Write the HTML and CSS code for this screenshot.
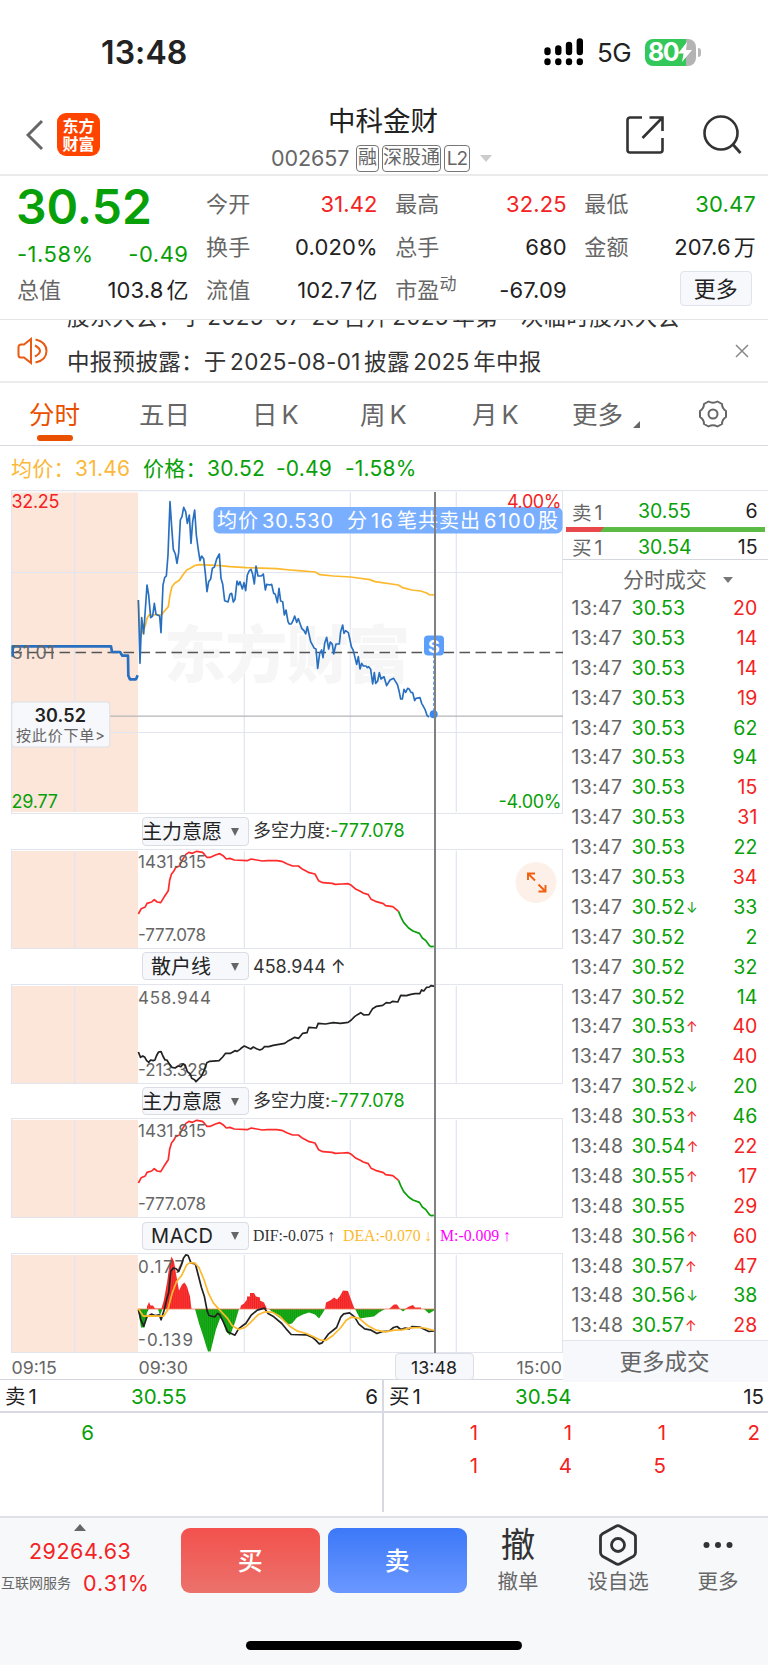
FILE: index.html
```html
<!DOCTYPE html>
<html lang="zh-CN">
<head>
<meta charset="utf-8">
<title>中科金财 002657</title>
<link rel="stylesheet" href="styles.css">
</head>
<body>
<div class="app">
  <div class="status">
    <span class="clock">13:48</span>
    <svg class="signal" width="40" height="28" viewBox="0 0 40 28"><g stroke="#000" stroke-width="6.4" stroke-linecap="round"><path d="M3.5 12.5V14M14.300 10.500V14M25 7V14M35.800 3.500V14M3.500 23.500v.5M14.300 23.500v.5M25 23.500v.5M35.800 23.500v.5"/></g></svg>
    <span class="net">5G</span>
    <span class="battery"><b>80</b><svg width="14" height="20" viewBox="0 0 14 20"><path d="M9 0 0 11.500h5.500L4 20 14 8H8z" fill="#fff"/></svg></span>
    <i class="nub"></i>
  </div>

  <header class="header">
    <svg class="back" width="18" height="32" viewBox="0 0 18 32"><path d="M16 2 2 16l14 14" fill="none" stroke="#666" stroke-width="3"/></svg>
    <div class="logo"><span>东方</span><span>财富</span></div>
    <div class="title">
      <h1>中科金财</h1>
      <div class="code"><span class="num">002657</span><i>融</i><i class="w3">深股通</i><i class="l2">L2</i><b class="tri"></b></div>
    </div>
    <svg class="share" width="40" height="40" viewBox="0 0 40 40"><path d="M17 2.500H5a2.500 2.500 0 0 0-2.500 2.500V35A2.500 2.500 0 0 0 5 37.500H35a2.500 2.500 0 0 0 2.500-2.500V23M24.500 2.500h13V16M37 3 17.500 23" fill="none" stroke="#333" stroke-width="2.600"/></svg>
    <svg class="search" width="42" height="42" viewBox="0 0 42 42"><circle cx="19" cy="19" r="16.500" fill="none" stroke="#333" stroke-width="2.600"/><path d="m30.500 30 8 9" stroke="#333" stroke-width="2.800"/></svg>
  </header>

  <section class="quote">
    <div class="col">
      <div class="price">30.52</div>
      <div class="pair chg"><span>-1.58%</span><span>-0.49</span></div>
      <div class="pair"><label>总值</label><span>103.8<em>亿</em></span></div>
    </div>
    <div class="col">
      <div class="pair"><label>今开</label><span class="r">31.42</span></div>
      <div class="pair"><label>换手</label><span>0.020%</span></div>
      <div class="pair"><label>流值</label><span>102.7<em>亿</em></span></div>
    </div>
    <div class="col">
      <div class="pair"><label>最高</label><span class="r">32.25</span></div>
      <div class="pair"><label>总手</label><span>680</span></div>
      <div class="pair"><label>市盈<sup>动</sup></label><span>-67.09</span></div>
    </div>
    <div class="col">
      <div class="pair"><label>最低</label><span class="g">30.47</span></div>
      <div class="pair"><label>金额</label><span>207.6<em>万</em></span></div>
      <div class="pair end"><button class="more">更多</button></div>
    </div>
  </section>

  <section class="notice">
    <svg class="horn" width="32" height="28" viewBox="0 0 32 28"><g fill="none" stroke="#e95a12" stroke-width="2"><path d="M14 2v24L7 20.500H4A2.500 2.500 0 0 1 1.500 18V10A2.500 2.500 0 0 1 4 7.500H7zM18 8.500q10 5.500 0 11M18.500 2.500q11 2.500 11 11.500t-11 11.500"/></g></svg>
    <div class="lines">
      <p class="first">股东大会：于<s></s>2025-07-23<s></s>召开<s></s>2025<s></s>年第一次临时股东大会</p>
      <p>中报预披露：于<s></s>2025-08-01<s></s>披露<s></s>2025<s></s>年中报</p>
    </div>
    <svg class="close" width="14" height="14" viewBox="0 0 14 14"><path d="m1 1 12 12M13 1 1 13" stroke="#888" stroke-width="1.500"/></svg>
  </section>

  <nav class="tabs">
    <span class="on">分时</span><span>五日</span><span>日<u>K</u></span><span>周<u>K</u></span><span>月<u>K</u></span><span>更多<b></b></span>
    <svg width="30" height="28" viewBox="0 0 30 28"><g fill="none" stroke="#666" stroke-width="2"><path d="M10.500 1.500Q15 4 19.500 1.500L24 4Q24 8.500 28 11V17Q24 19.500 24 24L19.500 26.500Q15 24 10.500 26.500L6 24Q6 19.500 2 17V11Q6 8.500 6 4Z" stroke-linejoin="round"/><circle cx="15" cy="14" r="4.500"/></g></svg>
  </nav>

  <div class="avg"><span class="o w1">均价：</span><span class="o w2">31.46</span><span class="w1">价格：</span><span class="w3a">30.52</span><span class="w3a">-0.49</span><span>-1.58%</span></div>

  <main class="main">
    <div class="charts">
      <svg class="plot" width="563" height="324" viewBox="0 490 563 324">
        <rect x="11.500" y="492.500" width="126.500" height="319.500" fill="#fce6da"/>
        <g stroke="#e2e5ee" stroke-width="1.200" fill="none"><path d="M11.500 490.600H563M11.500 490V814M11.500 572.500H563M11.500 732.500H563M11.500 813.600H563M562.600 490V814M74.700 492V812M244.300 492V812M350.300 492V812M456.300 492V812"/></g>
        <text x="164" y="678" class="mark" textLength="246">东方财富</text>
        <path d="M11.500 652.400H563" stroke="#555" stroke-width="1.500" stroke-dasharray="10.500 5.500"/>
        <path d="M110 716.200H563" stroke="#b5b5b5" stroke-width="1.300"/>
        <rect x="213.500" y="507" width="349" height="26.500" rx="6" fill="#7aafff"/>
        <g class="tip"><text x="217" y="528" textLength="41">均价</text><text x="262" y="528" textLength="71">30.530</text><text x="347" y="528">分</text><text x="371" y="528" textLength="22">16</text><text x="397" y="528" textLength="83">笔共卖出</text><text x="484" y="528" textLength="51">6100</text><text x="538" y="528">股</text></g>
        <g transform="translate(0 480) scale(.333333)" fill="none" stroke-linejoin="round">
          <polyline stroke="#fdb92e" stroke-width="5.200" points="415,360 421,470 428,455 436,437 441,415 447,405 485,404 492,395 505,380 510,345 516,320 524,310 538,301 548,286 560,270 572,264 586,256 600,254 660,257 690,260 740,263 830,266 870,270 895,272 945,276 960,284 1000,288 1052,291 1110,299 1125,305 1195,315 1208,323 1235,330 1262,333 1280,339 1288,344 1305,345"/>
          <path stroke="#286fc0" stroke-width="8" d="M38 530V499H333L336 516H360L367 527H384L385 587L390 598H408L413 586"/>
          <polyline stroke="#286fc0" stroke-width="5" points="415,360 420,550 425,413 431,462 441,315 446,345 452,413 458,408 463,370 468,403 479,408 483,458 489,315 494,293 499,288 504,225 510,65 515,140 520,208 526,222 531,250 536,218 541,120 546,110 551,82 557,95 562,130 568,105 573,190 578,125 584,90 589,165 595,210 600,242 605,228 611,236 616,280 621,335 626,305 632,297 637,265 643,262 650,237 658,222 663,295 668,312 674,362 684,366 690,343 695,340 700,366 705,358 711,303 716,315 720,305 727,327 732,308 737,332 742,285 748,272 753,268 758,283 763,312 768,258 774,288 784,288 790,282 796,330 800,313 810,315 815,313 821,340 826,343 832,368 837,325 842,363 848,365 853,405 858,390 864,425 868,432 874,432 879,422 884,408 890,427 895,416 905,445 912,452 917,462 922,440 932,485 943,505 948,507 953,565 959,520 965,510 969,533 974,490 980,472 986,507 991,486 997,493 1001,522 1008,492 1018,492 1022,455 1028,435 1032,460 1037,452 1045,458 1050,480 1054,500 1060,512 1070,553 1075,530 1080,567 1085,550 1090,558 1098,558 1102,563 1106,560 1112,568 1118,612 1123,578 1127,610 1133,603 1138,578 1143,597 1152,590 1160,617 1170,600 1181,595 1185,602 1192,613 1197,632 1202,657 1207,657 1212,628 1217,637 1223,625 1228,628 1233,637 1238,638 1244,662 1248,655 1260,653 1265,670 1275,688 1281,706 1287,711"/>
          <path d="M1302 525V700" stroke="#4a92f5" stroke-width="5" stroke-dasharray="9 7"/>
          <circle cx="1301" cy="703" r="12" fill="#3b87f2"/>
        </g>
        <rect x="424" y="635.500" width="20" height="20" rx="4" fill="#5b9ffb"/>
        <text x="434" y="652.500" class="sell">S</text>
        <g class="ax"><text x="11.500" y="508" class="fr" textLength="48">32.25</text><text x="11.500" y="658.500" textLength="43">31.01</text><text x="11.500" y="807.500" class="fg" textLength="46.500">29.77</text><text x="507" y="508" class="fr" textLength="54.500">4.00%</text><text x="498.500" y="807.500" class="fg" textLength="63">-4.00%</text></g>
        <rect x="11.800" y="702" width="98" height="45" rx="3" fill="#f6f8fb" stroke="#dcdfe6"/>
        <text x="34.500" y="722" class="op" textLength="51.500">30.52</text>
        <text x="16" y="740.500" class="ob" textLength="89">按此价下单&gt;</text>
      </svg>

      <div class="ind"><button><span>主力意愿</span><b></b></button><p>多空力度:<em>-777.078</em></p></div>
      <svg class="plot" width="563" height="100" viewBox="0 849 563 100">
        <use href="#band" y="849"/>
        <use href="#force"/>
        <g class="ay"><text x="138" y="867.500" textLength="68">1431.815</text><text x="138" y="940.500" textLength="68">-777.078</text></g>
        <circle cx="536" cy="882.500" r="20.500" fill="#fdf0e9"/>
        <path d="M528 880V873.500H535M528 873.500 535 880.500M545.500 885V891.500H538.500M545.500 891.500 538.500 884.500" fill="none" stroke="#f0600f" stroke-width="1.900"/>
      </svg>

      <div class="ind"><button class="mid"><span>散户线</span><b></b></button><p class="wide">458.944 ↑</p></div>
      <svg class="plot" width="563" height="100" viewBox="0 984 563 100">
        <use href="#band" y="984"/>
        <g class="ay"><text x="138" y="1003.500" textLength="73">458.944</text><text x="138" y="1075.500" textLength="70">-213.328</text></g>
        <polyline transform="translate(0 810) scale(.36034 .333333)" class="ln" stroke="#222" points="384,726 390,742 396,738 402,742 407,752 413,757 418,750 425,752 430,750 434,738 440,726 447,725 452,738 458,750 463,750 470,762 477,772 486,774 494,768 502,770 508,762 514,766 520,785 528,792 532,805 540,809 544,815 550,808 558,800 566,783 574,758 582,754 608,752 618,741 626,730 640,730 645,727 652,722 658,724 666,718 671,713 678,708 688,713 696,717 703,711 712,716 721,720 728,717 734,710 746,710 758,706 790,700 798,694 806,689 818,682 829,685 840,670 852,668 857,652 878,654 883,640 903,642 925,638 945,640 966,637 975,630 984,620 992,614 1001,608 1010,615 1024,614 1034,596 1045,589 1062,586 1072,578 1082,579 1090,574 1104,576 1112,556 1128,557 1140,553 1152,551 1165,551 1170,540 1176,543 1184,532 1192,531 1196,527 1206,529"/>
      </svg>

      <div class="ind"><button><span>主力意愿</span><b></b></button><p>多空力度:<em>-777.078</em></p></div>
      <svg class="plot" width="563" height="100" viewBox="0 1118.500 563 100">
        <defs>
          <g id="band"><rect x="11.500" y="2" width="126.500" height="97" fill="#fce6da"/><path d="M11.500 .5H563M11.500 99.500H563M11.500 0V100M562.600 0V100M74.700 2V99M244.300 2V99M350.300 2V99M456.300 2V99" stroke="#e2e5ee" stroke-width="1.200"/></g>
          <g id="force"><g transform="translate(0 810) scale(.36034 .333333)" class="ln">
            <polyline stroke="#ff2a2a" points="384,312 392,296 403,291 408,280 421,276 428,269 436,276 446,278 455,262 467,242 471,210 476,192 482,184 488,172 498,168 506,150 516,133 524,127 534,130 546,124 562,127 568,134 574,142 584,142 598,135 610,131 619,137 628,147 638,145 650,150 686,152 697,147 728,153 742,152 768,152 782,154 796,161 812,168 828,168 840,178 848,182 858,188 874,192 884,212 896,218 922,220 930,223 950,222 966,221 975,226 988,238 1000,244 1008,249 1022,254 1030,268 1042,274 1064,281 1070,287 1090,290 1106,304"/>
            <polyline stroke="#0aa00a" points="1106,304 1112,320 1120,337 1134,354 1146,363 1164,370 1172,384 1182,392 1192,407 1197,410 1204,409"/>
          </g></g>
          <pattern id="rs" width="1.910" height="10" patternUnits="userSpaceOnUse"><rect width="1.910" height="10" fill="#f85a5a"/><rect width="1.500" height="10" fill="#f42020"/></pattern>
          <pattern id="gs" width="1.910" height="10" patternUnits="userSpaceOnUse"><rect width="1.910" height="10" fill="#45b845"/><rect width="1.500" height="10" fill="#08a008"/></pattern>
        </defs>
        <use href="#band" y="1118.500"/>
        <use href="#force" y="269.500"/>
        <g class="ay"><text x="138" y="1137" textLength="68">1431.815</text><text x="138" y="1210" textLength="68">-777.078</text></g>
      </svg>

      <div class="ind"><button class="mid"><span class="en">MACD</span><b></b></button><p class="macd"><i class="d1">DIF:-0.075 ↑</i><i class="d2">DEA:-0.070 ↓</i><i class="d3">M:-0.009 ↑</i></p></div>
      <svg class="plot" width="563" height="100" viewBox="0 1253.500 563 100">
        <use href="#band" y="1253.500"/>
        <path fill="url(#rs)" d="M147 1309.500V1307L149 1302.500 150.500 1306H153L155 1309H161.500L164 1300 167 1283 170 1262 171.500 1257 174 1262 177 1280 179 1291 182 1285 184.500 1283 187 1287 190 1297 191.500 1309.500ZM240 1309.500 241 1306 244 1304 247 1300V1297H250V1293.500H254L256 1297 260 1298V1301L264 1303 267 1309.500ZM325 1309.500 326 1303 331 1300.500 334 1298 337 1300 340 1296.500 343 1291 348 1291.500 351 1300 354 1308 355 1309.500ZM389 1309.500 394 1305H397L400 1309.500ZM405 1309.500 409 1307 413 1305.500 415 1308H421V1309.500Z"/>
        <path fill="url(#gs)" d="M138 1309.500 141 1328H144.500L147 1313 149 1309.500ZM158 1309.500 160 1316 162.500 1309.500ZM195 1309.500 199 1324 203 1336 206 1346 208 1352H210.500L213 1342 216 1330 220 1319 222 1319 226 1332 230 1336 235 1323 239 1309.500ZM269 1309.500 275 1315 282 1320 288 1325 292 1324 297 1318 303 1315 309 1313 315 1315 319 1319 323 1313 325 1309.500ZM355 1309.500 360 1319 366 1318 374 1317 379 1313 385 1309.500ZM400 1309.500 403 1312 406 1309.500ZM424 1309.500 429 1314 434 1311V1309.500Z"/>
        <path d="M138 1309.500H435" stroke="#f07a5c" stroke-width=".8"/>
        <g class="ay"><text x="138" y="1273" textLength="46">0.177</text><text x="138" y="1346" textLength="55">-0.139</text></g>
        <g transform="translate(0 1080) scale(.36034 .333333)" class="ln">
          <polyline stroke="#222" points="384,690 391,722 399,740 408,712 414,708 420,704 430,708 442,706 447,721 456,690 463,658 468,640 474,575 481,566 488,567 496,576 504,555 509,536 516,526 522,528 530,550 542,553 551,590 559,624 567,650 575,695 580,708 596,712 604,702 610,706 620,728 632,757 652,767 662,748 674,738 682,732 698,706 714,692 734,686 744,702 760,712 782,732 794,748 808,765 850,766 866,773 876,782 886,793 894,790 912,763 934,744 946,712 954,703 970,700 984,712 996,734 1012,748 1030,752 1046,762 1062,756 1080,755 1092,744 1102,741 1112,750 1124,746 1136,748 1144,741 1166,743 1190,756 1206,754"/>
          <polyline stroke="#fdb92e" points="384,688 398,710 414,709 454,710 466,690 478,640 490,606 504,588 518,556 526,550 540,550 552,564 566,600 578,640 592,670 610,692 630,715 644,738 662,750 680,744 694,730 716,706 736,697 756,698 776,710 790,726 806,742 826,755 850,762 870,772 890,782 904,783 924,768 946,744 960,723 974,713 996,716 1020,738 1044,752 1070,757 1094,752 1116,751 1140,745 1168,744 1184,747 1206,753"/>
        </g>
      </svg>
      <div class="axis"><span>09:15</span><span>09:30</span><span class="now">13:48</span><span class="last">15:00</span></div>
      <i class="cross"></i>
    </div>

    <aside class="side">
      <div class="lvl"><label>卖<u>1</u></label><span>30.55</span><b>6</b></div>
      <svg class="ratio" width="199" height="5" viewBox="0 0 199 5"><path d="M0 0H199V5H0z" fill="#5bbb44"/><path d="M0 0H38L34 5H0z" fill="#e8484b"/></svg>
      <div class="lvl l2nd"><label>买<u>1</u></label><span>30.54</span><b>15</b></div>
      <div class="dealhd">分时成交<b></b></div>
      <ol class="deals">
        <li><time>13:47</time><span>30.53</span><b class="r">20</b></li>
        <li><time>13:47</time><span>30.53</span><b class="r">14</b></li>
        <li><time>13:47</time><span>30.53</span><b class="r">14</b></li>
        <li><time>13:47</time><span>30.53</span><b class="r">19</b></li>
        <li><time>13:47</time><span>30.53</span><b class="g">62</b></li>
        <li><time>13:47</time><span>30.53</span><b class="g">94</b></li>
        <li><time>13:47</time><span>30.53</span><b class="r">15</b></li>
        <li><time>13:47</time><span>30.53</span><b class="r">31</b></li>
        <li><time>13:47</time><span>30.53</span><b class="g">22</b></li>
        <li><time>13:47</time><span>30.53</span><b class="r">34</b></li>
        <li><time>13:47</time><span>30.52<i class="g">↓</i></span><b class="g">33</b></li>
        <li><time>13:47</time><span>30.52</span><b class="g">2</b></li>
        <li><time>13:47</time><span>30.52</span><b class="g">32</b></li>
        <li><time>13:47</time><span>30.52</span><b class="g">14</b></li>
        <li><time>13:47</time><span>30.53<i class="r">↑</i></span><b class="r">40</b></li>
        <li><time>13:47</time><span>30.53</span><b class="r">40</b></li>
        <li><time>13:47</time><span>30.52<i class="g">↓</i></span><b class="g">20</b></li>
        <li><time>13:48</time><span>30.53<i class="r">↑</i></span><b class="g">46</b></li>
        <li><time>13:48</time><span>30.54<i class="r">↑</i></span><b class="r">22</b></li>
        <li><time>13:48</time><span>30.55<i class="r">↑</i></span><b class="r">17</b></li>
        <li><time>13:48</time><span>30.55</span><b class="r">29</b></li>
        <li><time>13:48</time><span>30.56<i class="r">↑</i></span><b class="r">60</b></li>
        <li><time>13:48</time><span>30.57<i class="r">↑</i></span><b class="r">47</b></li>
        <li><time>13:48</time><span>30.56<i class="g">↓</i></span><b class="g">38</b></li>
        <li><time>13:48</time><span>30.57<i class="r">↑</i></span><b class="r">28</b></li>
      </ol>
      <div class="moredeals">更多成交</div>
    </aside>
  </main>

  <section class="depth">
    <div class="half">
      <div class="dh"><label>卖<u>1</u></label><span>30.55</span><b>6</b></div>
      <div class="q g"><span>6</span></div>
    </div>
    <div class="half right">
      <div class="dh"><label>买<u>1</u></label><span>30.54</span><b>15</b></div>
      <div class="q r"><span>1</span><span>1</span><span>1</span><span>2</span><span>1</span><span>4</span><span>5</span></div>
    </div>
  </section>

  <footer class="bottom">
    <div class="index"><b></b><div class="val">29264.63</div><div class="sub"><span>互联网服务</span><em>0.31%</em></div></div>
    <button class="buy">买</button><button class="sellb">卖</button>
    <div class="act a1"><div class="ic che">撤</div><span>撤单</span></div>
    <div class="act a2"><div class="ic"><svg width="40" height="42" viewBox="0 0 40 42"><g fill="none" stroke="#333" stroke-width="2.800"><path d="M18 2.200Q20 1 22 2.200L35.500 9.800Q37.500 11 37.500 13.500V28.500Q37.500 31 35.500 32.200L22 39.800Q20 41 18 39.800L4.500 32.200Q2.500 31 2.500 28.500V13.500Q2.500 11 4.500 9.800Z"/><circle cx="20" cy="21" r="6.500"/></g></svg></div><span>设自选</span></div>
    <div class="act a3"><div class="ic"><svg width="32" height="42" viewBox="0 0 32 42"><g fill="#333"><circle cx="4.500" cy="21" r="3"/><circle cx="16" cy="21" r="3"/><circle cx="27.500" cy="21" r="3"/></g></svg></div><span>更多</span></div>
    <i class="home"></i>
  </footer>
</div>
</body>
</html>
```
FILE: styles.css
```css
*{box-sizing:border-box}
body{margin:0;background:#fff;font-family:Inter,"Noto Sans CJK SC",sans-serif;color:#222}
i,em{font-style:normal}
u{text-decoration:none}
b{font-weight:400}
h1,p,ol{margin:0;padding:0;font-weight:400}
button{font-family:inherit;padding:0;margin:0;border:0}
.app{width:768px;height:1665px;overflow:hidden;display:flex;flex-direction:column}
.app>*{flex:none}
svg{display:block;flex:none}
.r{color:#f42222}
.g{color:#08a008}

.status{height:104px;display:flex;align-items:center;padding:0 0 0 101px}
.clock{font-size:32px;font-weight:600;width:443px;letter-spacing:.1px}
.signal{margin-right:13px}
.net{font-size:26px;width:48px;letter-spacing:-.6px}
.battery{width:51px;height:27px;border-radius:8px;background:linear-gradient(90deg,#34c759 41px,#b3b3b3 41px);display:flex;align-items:center;padding-left:3px}
.battery b{color:#fff;font-weight:700;font-size:25px;letter-spacing:-1.500px}
.nub{width:3px;height:9px;margin-left:1.500px;background:#b8b8b8;border-radius:0 3px 3px 0}

.header{height:72px;border-bottom:2px solid #ebebeb;display:flex;align-items:flex-start;padding-left:26px}
.back{margin-top:15px}
.logo{width:43px;height:43px;margin:9px 0 0 13px;border-radius:9px;background:#ff4400;color:#fff;font-weight:700;font-size:16px;line-height:18px;display:flex;flex-direction:column;align-items:center;justify-content:center}
.title{width:368px;margin-left:99px;display:flex;flex-direction:column;align-items:center}
.title h1{font-size:27.500px;line-height:34px;color:#222;width:110px}
.code{display:flex;align-items:center;height:30px;margin-top:5px;margin-left:-3px;color:#666}
.code .num{font-size:21.500px;width:85px;letter-spacing:-.1px}
.code i{height:27px;width:23px;margin-right:3px;border:1.500px solid #777;border-radius:4px;font-size:19px;line-height:23px;text-align:center;white-space:nowrap;display:flex;justify-content:center}
.code .w3{width:59px}
.code .l2{width:26px;letter-spacing:-.8px;margin-right:10px;line-height:25px}
.tri{border:6px solid transparent;border-top:7px solid #ccc;border-bottom:0}
.share{margin:11px 0 0 58px}
.search{margin:10px 0 0 37px}

.quote{height:144px;border-bottom:1.500px solid #e4e4e4;display:grid;grid-template-columns:repeat(4,171.500px);column-gap:17.600px;padding:6px 0 0 17px}
.pair{height:43px;display:flex;align-items:center;justify-content:space-between;font-size:22px;line-height:30px;letter-spacing:.1px;white-space:nowrap}
.pair label{color:#666}
.pair em{margin-left:3px}
.price{height:52px;line-height:50px;font-size:48px;font-weight:600;color:#08a008;margin-left:-1px}
.pair.chg{height:40px;color:#08a008;padding-bottom:1px;letter-spacing:.5px}
.chg+.pair{height:32px}
.pair sup{font-size:17px;line-height:10px;vertical-align:8px}
.end{justify-content:flex-end}
.more{width:72px;height:35px;margin-right:4px;margin-top:-2px;background:#f6f8fb;border:1.500px solid #dfe3ea;border-radius:4px;font-size:22px;line-height:30px;color:#222}

.notice{height:63px;border-bottom:2px solid #ececec;display:flex;overflow:hidden;padding-left:17px}
.horn{margin-top:17px}
.lines{width:686px;padding-left:18px}
.lines p{height:45px;line-height:45px;font-size:22.500px;letter-spacing:.3px;color:#333;white-space:nowrap}
.lines .first{margin-top:-26px}
.lines s{display:inline-block;width:3.500px}
.close{margin-top:24px}

.tabs{height:63px;border-bottom:1.500px solid #d8d8de;display:grid;grid-template-columns:110px 113px 108px 112px 100px 125px 40px;padding-left:29px;font-size:25.500px;line-height:63px;color:#666}
.tabs u{margin-left:4px}
.tabs .on{color:#e95000;position:relative}
.on::after{content:"";position:absolute;left:8px;top:52px;width:36px;height:6px;border-radius:3px;background:#e95000}
.tabs span b{display:inline-block;margin-left:10px;border-left:7px solid transparent;border-bottom:7px solid #666;transform:translateY(4px)}
.tabs svg{margin:17px 0 0 1px}

.avg{height:44px;display:flex;padding-left:11px;font-size:21px;line-height:46px;color:#08a008;letter-spacing:.2px}
.avg .o{color:#fbb83a}
.avg .w1{width:64px;white-space:nowrap}
.avg .w2{width:68px}
.avg .w3a{width:69px}

.main{display:flex;height:893px}
.charts{width:563px;position:relative;display:flex;flex-direction:column}
.ind{height:34.830px;display:flex;align-items:center;padding-left:142px;flex:none}
.ind button{width:106.500px;height:28.500px;background:#f6f8fb;border:1px solid #d9dce3;border-radius:4px;display:flex;align-items:center;justify-content:space-between;padding:1px 9px 0 0;color:#222;font-size:20px;line-height:26px}
.ind button span{margin-left:-1px}
.ind .mid{padding-left:9px}
.ind .en{letter-spacing:.6px}
.ind button b{border:4.500px solid transparent;border-top:8px solid #666;border-bottom:0}
.ind p{font-size:18px;margin-left:4.500px;white-space:nowrap;color:#333;line-height:26px}
.ind p em{color:#08a008;letter-spacing:.1px}
.ind .wide{padding-top:1px}
.ind .macd{font-family:"Liberation Serif",Inter,serif;font-size:15.800px;display:flex}
.macd .d1{width:90px}.macd .d2{width:97px;color:#fdb92e}.macd .d3{color:#f0f}
.mark{font-size:62px;font-weight:900;fill:#f6f6f7}
.tip{font-size:20px;fill:#fff}
.sell{font-size:18px;font-weight:700;fill:#fff;text-anchor:middle}
.ax{font-size:18px;fill:#666}
.fr{fill:#f42222}.fg{fill:#08a008}
.op{font-size:18px;font-weight:600;fill:#222}
.ob{font-size:15px;fill:#666}
.ay{font-size:17px;fill:#666}
.ln{fill:none;stroke-linejoin:round}
.ln polyline,polyline.ln{stroke-width:1.700px;vector-effect:non-scaling-stroke}
.axis{height:26.500px;display:grid;grid-template-columns:127px 256px 79px 1fr;padding-left:11.500px;border-bottom:1.500px solid #d5d7de;font-size:17.800px;line-height:29px;color:#666}
.axis .now{height:27px;background:#f6f8fb;border:1px solid #dcdfe6;border-radius:4px;color:#222;text-align:center;line-height:27px}
.axis .last{text-align:right;margin-right:1px}
.cross{position:absolute;left:434px;top:2px;width:1.500px;height:861px;background:#808080}

.side{width:205px;border-top:1px solid #e2e5ee;display:flex;flex-direction:column}
.lvl{height:36px;padding:4px 10.500px 0 9px;display:grid;grid-template-columns:66px 1fr auto;align-items:center;font-size:19.500px}
.lvl label{color:#666}
.lvl label,.dh label{white-space:nowrap}
label u{margin-left:3px}
.lvl span{color:#08a008}
.ratio{margin-left:2.500px}
.l2nd{height:28px;padding-top:0;border-bottom:1.500px solid #d5d7de}
.dealhd{height:33px;padding-left:60px;font-size:21px;line-height:39px;color:#666;letter-spacing:-.1px}
.dealhd b{display:inline-block;margin-left:16px;border:5px solid transparent;border-top:6px solid #777;border-bottom:0;vertical-align:4px}
.deals{list-style:none;height:746.500px}
.deals li{height:29.900px;display:grid;grid-template-columns:60px 1fr auto;align-items:center;padding:0 10.500px 0 8.500px;font-size:19.500px;letter-spacing:.1px}
.deals time{color:#666;letter-spacing:.3px}
.deals span{color:#08a008;white-space:nowrap}
.deals i{font-size:14px;vertical-align:1px;margin-left:1px}
.moredeals{height:42px;border-top:1px solid #e2e5ee;background:#f6f8fb;text-align:center;font-size:22.500px;line-height:42px;color:#666;padding-right:2px}

.depth{height:132px;display:flex;margin-top:-3px}
.half{width:382px}
.right{width:386px;border-left:2px solid #d8d9e2}
.dh{height:32.500px;border-bottom:2px solid #d8d9e2;padding:3px 5px 0 5px;display:grid;grid-template-columns:126px 1fr auto;align-items:center;font-size:20.500px;line-height:26px}
.half .dh>b{margin-right:-1px}
.dh span{color:#08a008}
.q{padding:3px 0 0;display:grid;grid-template-columns:repeat(4,94px);font-size:20.500px;line-height:33.500px;text-align:right}

.bottom{height:155px;margin-top:4px;border-top:2px solid #dfe1e6;background:#f7f8fa;display:flex;align-items:flex-start;position:relative}
.index{width:180.500px;color:#f42222}
.index>b{display:block;width:0;margin:6px 0 0 74px;border:6.500px solid transparent;border-bottom:7px solid #666;border-top:0}
.val{font-size:21.500px;line-height:30px;margin:5px 0 0 29px;letter-spacing:.5px}
.sub{display:flex;align-items:center;height:33px;padding-left:1px}
.sub span{font-size:14px;color:#666;width:82px;padding-bottom:1px}
.sub em{font-size:21.500px;letter-spacing:1px}
.buy,.sellb{width:139.500px;height:65px;margin:10px 7.500px 0 0;border-radius:9px;color:#fff;font-size:25px;font-weight:500;padding:0 0 3px}
.buy{background:linear-gradient(#f3514c,#eb726c)}
.sellb{background:linear-gradient(#3c78f8,#6b98ff)}
.act{display:flex;flex-direction:column;align-items:center;font-size:20.500px;color:#666;line-height:24px;padding-top:6px}
.ic{height:46px}
.che{font-size:34.500px;line-height:42px;color:#333}
.a1{width:66px;margin-left:10.500px}
.a2{width:80px;margin-left:27px}
.a3{width:60px;margin-left:30px}
.home{position:absolute;left:246px;top:123px;width:276px;height:9px;border-radius:5px;background:#000}
```
